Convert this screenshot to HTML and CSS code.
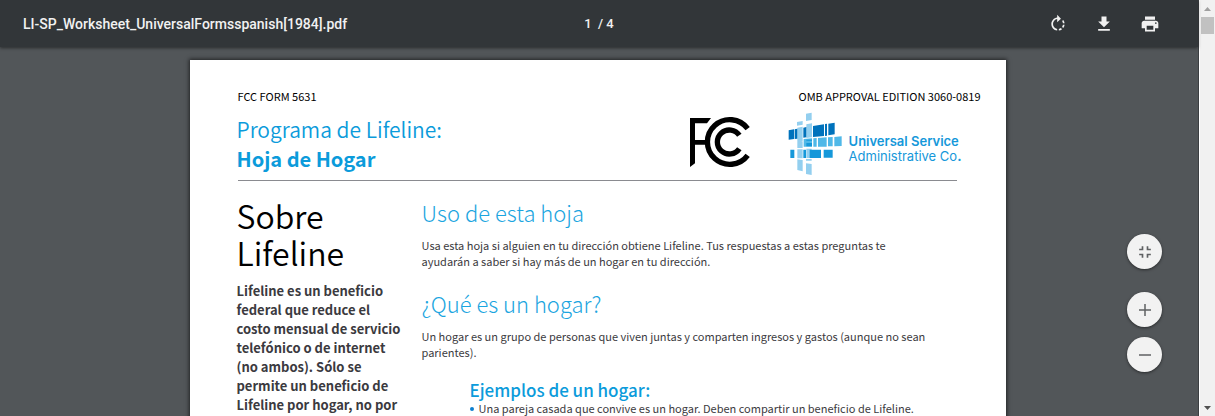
FILE: index.html
```html
<!DOCTYPE html>
<html lang="es">
<head>
<meta charset="utf-8">
<title>LI-SP_Worksheet_UniversalFormsspanish[1984].pdf</title>
<meta name="viewport" content="width=device-width, initial-scale=1">
<link rel="stylesheet" href="styles.css">
</head>
<body>
<div class="viewer">
  <header class="toolbar">
    <span class="file-name">LI-SP_Worksheet_UniversalFormsspanish[1984].pdf</span>
    <span class="page-count">1&nbsp; / 4</span>
    <div class="actions">
      <button class="tool" type="button" aria-label="Rotate"><svg viewBox="0 0 24 24"><path d="M15.55 5.55L11 1v3.07C7.06 4.56 4 7.92 4 12s3.05 7.44 7 7.93v-2.02c-2.84-.48-5-2.94-5-5.91s2.16-5.43 5-5.91V10l4.55-4.45zM19.93 11c-.17-1.39-.72-2.73-1.62-3.89l-1.42 1.42c.54.75.88 1.6 1.02 2.47h2.02zM13 17.9v2.02c1.39-.17 2.74-.71 3.9-1.61l-1.44-1.44c-.75.54-1.59.89-2.46 1.03zm3.89-2.42l1.42 1.41c.9-1.16 1.45-2.5 1.62-3.89h-2.02c-.14.87-.48 1.72-1.02 2.48z"/></svg></button>
      <button class="tool" type="button" aria-label="Download"><svg viewBox="0 0 24 24"><path d="M19 9h-4V3H9v6H5l7 7 7-7zM5 18v2h14v-2H5z"/></svg></button>
      <button class="tool" type="button" aria-label="Print"><svg viewBox="0 0 24 24"><path d="M19 8H5c-1.66 0-3 1.34-3 3v6h4v4h12v-4h4v-6c0-1.66-1.34-3-3-3zm-3 11H8v-5h8v5zm3-7c-.55 0-1-.45-1-1s.45-1 1-1 1 .45 1 1-.45 1-1 1zm-1-9H6v4h12V3z"/></svg></button>
    </div>
  </header>

  <main class="canvas">
    <article class="sheet">
      <div class="form-ids">
        <span>FCC FORM 5631</span>
        <span>OMB APPROVAL EDITION 3060-0819</span>
      </div>
      <div class="masthead">
        <h1 class="title">Programa de Lifeline:<strong>Hoja de Hogar</strong></h1>
        <svg class="fcc" viewBox="30 16 183 156" role="img" aria-label="FCC">
          <path d="M30 22H93L81 38H45V88H80V102H45V158L30 169Z"/>
          <g fill="none" stroke="#000" stroke-width="16">
            <path d="M203 54A67 67 0 1 0 203 134"/>
            <path d="M178 74A36 36 0 1 0 178 114"/>
          </g>
        </svg>
        <div class="usac">
          <svg class="usac-mark" viewBox="22 22 165 192" aria-hidden="true">
            <g fill="#93cfef">
              <path d="M49 52L66 49V60L49 63ZM76 27L93 24V46L76 49ZM50 69L66 66V109L50 111ZM77 59L94 56V98L77 100ZM50 110H66V130H50ZM50 134H66V161H50ZM50 164L66 166V200L50 196ZM77 132H93V160H77ZM76 163H93V168H76ZM76 176L93 178V211L76 208Z"/>
            </g>
            <path fill="#0072bc" d="M24 77L40 74V103L24 105ZM42 74L50 72V102L42 103ZM68 69L77 67V98L68 99ZM97 64L130 59V94L97 97ZM133 58L139 57V93L133 94ZM143 57L162 54V89L143 92Z"/>
            <path fill="#4fb8e8" d="M69 103L94 101V126H69ZM98 101L108 100V126H98ZM112 100L138 98V126H112ZM142 98L156 97V125H142ZM161 97L183 95V124L161 125Z"/>
            <path fill="#1598da" d="M77 105H94V108H77ZM77 115H94V125H77ZM29 135H41V160H29ZM68 135H76V160H68ZM87 135H121V160H87ZM129 135H156V159H129Z"/>
          </svg>
          <p class="usac-name"><strong>Universal Service</strong>Administrative Co<b>.</b></p>
        </div>
      </div>
      <div class="columns">
        <section class="aside">
          <h2>Sobre<br>Lifeline</h2>
          <p>Lifeline es un beneficio<br>federal que reduce el<br>costo mensual de servicio<br>telefónico o de internet<br>(no ambos). Sólo se<br>permite un beneficio de<br>Lifeline por hogar, no por</p>
        </section>
        <section class="body">
          <h3>Uso de esta hoja</h3>
          <p>Usa esta hoja si alguien en tu dirección obtiene Lifeline. Tus respuestas a estas preguntas te<br>ayudarán a saber si hay más de un hogar en tu dirección.</p>
          <h3>¿Qué es un hogar?</h3>
          <p>Un hogar es un grupo de personas que viven juntas y comparten ingresos y gastos (aunque no sean<br>parientes).</p>
          <div class="examples">
            <h4>Ejemplos de un hogar:</h4>
            <ul>
              <li>Una pareja casada que convive es un hogar. Deben compartir un beneficio de Lifeline.</li>
            </ul>
          </div>
        </section>
      </div>
    </article>
  </main>

  <div class="zoom-controls">
    <button class="round fit" type="button" aria-label="Fit to page"><svg viewBox="0 0 24 24"><path d="M5 16h3v3h2v-5H5v2zm3-8H5v2h5V5H8v3zm6 11h2v-3h3v-2h-5v5zm2-11V5h-2v5h5V8h-3z"/></svg></button>
    <button class="round" type="button" aria-label="Zoom in"><svg viewBox="0 0 24 24"><path d="M20 13h-7v7h-2v-7H4v-2h7V4h2v7h7v2z"/></svg></button>
    <button class="round" type="button" aria-label="Zoom out"><svg viewBox="0 0 24 24"><path d="M20 13H4v-2h16v2z"/></svg></button>
  </div>
</div>
<div class="scrollbar" aria-hidden="true">
  <svg class="arrow up" viewBox="0 0 7 4"><path d="M0 4L3.500 0L7 4Z"/></svg>
  <div class="thumb"></div>
  <svg class="arrow down" viewBox="0 0 7 4"><path d="M0 0H7L3.500 4Z"/></svg>
</div>
</body>
</html>
```

FILE: styles.css
```css
* { box-sizing: border-box; margin: 0; padding: 0; }

body {
  display: flex;
  height: 100vh;
  overflow: hidden;
  background: #525659;
  font-family: "Noto Sans CJK SC", "Noto Sans", sans-serif;
}

button { border: 0; cursor: pointer; }

.viewer {
  position: relative;
  display: flex;
  flex: 1;
  flex-direction: column;
  min-width: 0;
  border-right: 1px solid #3c3f42;
}

.toolbar {
  z-index: 1;
  display: grid;
  grid-template-columns: 1fr auto 1fr;
  flex: none;
  align-items: center;
  height: 47px;
  padding: 0 23px;
  background: #323639;
  box-shadow: 0 1px 3px rgba(0, 0, 0, .5);
  color: #f1f1f1;
  font: 500 14px/20px Roboto, sans-serif;
}

.page-count { font-size: 13px; }

.actions { display: flex; gap: 14px; justify-content: flex-end; padding-right: 9px; }

.tool {
  display: grid;
  place-items: center;
  width: 32px;
  height: 32px;
  background: none;
}

.tool svg { width: 20px; height: 20px; fill: #f1f1f1; }

.canvas {
  display: flex;
  flex: 1;
  justify-content: center;
  min-height: 0;
  padding: 13px 3px 0 0;
  overflow: hidden;
}

.sheet {
  flex: none;
  width: 816px;
  max-width: 100%;
  min-height: 1056px;
  padding: 28px 49px 48px 47px;
  background: #fff;
  box-shadow: 0 0 4px 1px rgba(0, 0, 0, .6);
  color: #3b3a40;
}

.form-ids {
  display: flex;
  justify-content: space-between;
  margin-right: -24px;
  padding-left: 1px;
  color: #000;
  font-size: 11px;
  line-height: 16px;
}

.masthead {
  display: flex;
  align-items: center;
  height: 77px;
  margin-left: 1px;
  border-bottom: 1px solid #8a8b90;
}

.title {
  flex: 1;
  margin-left: -1px;
  padding-top: 4px;
  color: #0b9bdb;
  font-size: 21px;
  font-weight: 350;
  line-height: 29px;
}

.title strong { display: block; font-size: 20px; font-weight: 700; }

.fcc { width: 61px; height: 52px; margin-right: 37px; }

.usac { display: flex; align-items: center; gap: 6px; margin-right: -5px; padding-top: 3px; }

.fcc + .usac { margin-right: -5px; }

.usac-mark { width: 55px; height: 64px; }

.usac-name {
  padding-top: 11px;
  color: #1598da;
  font: 400 13px/15px Inter, sans-serif;
}

.usac-name strong { display: block; font-weight: 600; }

.columns {
  display: grid;
  grid-template-columns: 185px 1fr;
  padding-top: 16px;
}

.aside h2 {
  color: #000;
  font-size: 32px;
  font-weight: 350;
  line-height: 37px;
}

.aside p {
  padding-top: 10px;
  font-size: 13px;
  font-weight: 600;
  line-height: 19px;
  white-space: nowrap;
}

.body h3 {
  color: #1ba5e0;
  font-size: 22px;
  font-weight: 300;
  line-height: 30px;
}

.body p { padding: 10px 0 19px; font-size: 11px; line-height: 16px; white-space: nowrap; }

.examples { padding-left: 48px; }

.examples h4 {
  color: #0b9bdb;
  font-size: 17px;
  font-weight: 500;
  line-height: 21px;
}

.examples ul { padding-left: 9px; font-size: 11px; line-height: 16px; list-style: none; }

.examples li { white-space: nowrap; }

.examples li::before {
  display: inline-block;
  width: 4px;
  height: 4px;
  margin: 0 5px 2px -9px;
  border-radius: 50%;
  background: #0b7fd0;
  content: "";
}

.zoom-controls {
  position: absolute;
  right: 36px;
  bottom: 44px;
  display: flex;
  flex-direction: column;
  gap: 10px;
}

.round {
  display: grid;
  place-items: center;
  width: 35px;
  height: 35px;
  border-radius: 50%;
  background: #f2f2f2;
  box-shadow: 0 1px 3px rgba(0, 0, 0, .5);
}

.fit { margin-bottom: 13px; }

.round svg { width: 18px; height: 18px; fill: #5f6163; }

.fit svg { width: 20px; height: 20px; }

.scrollbar {
  display: flex;
  flex: none;
  flex-direction: column;
  align-items: center;
  width: 16px;
  padding: 7px 0 6px;
  border-left: 1px solid #fff;
  background: #f1f1f1;
}

.arrow { width: 7px; height: 4px; fill: #a0a0a0; }

.thumb { width: 13px; height: 17px; margin-top: 6px; background: #c1c1c1; }

.down { margin-top: auto; fill: #505050; }
```
